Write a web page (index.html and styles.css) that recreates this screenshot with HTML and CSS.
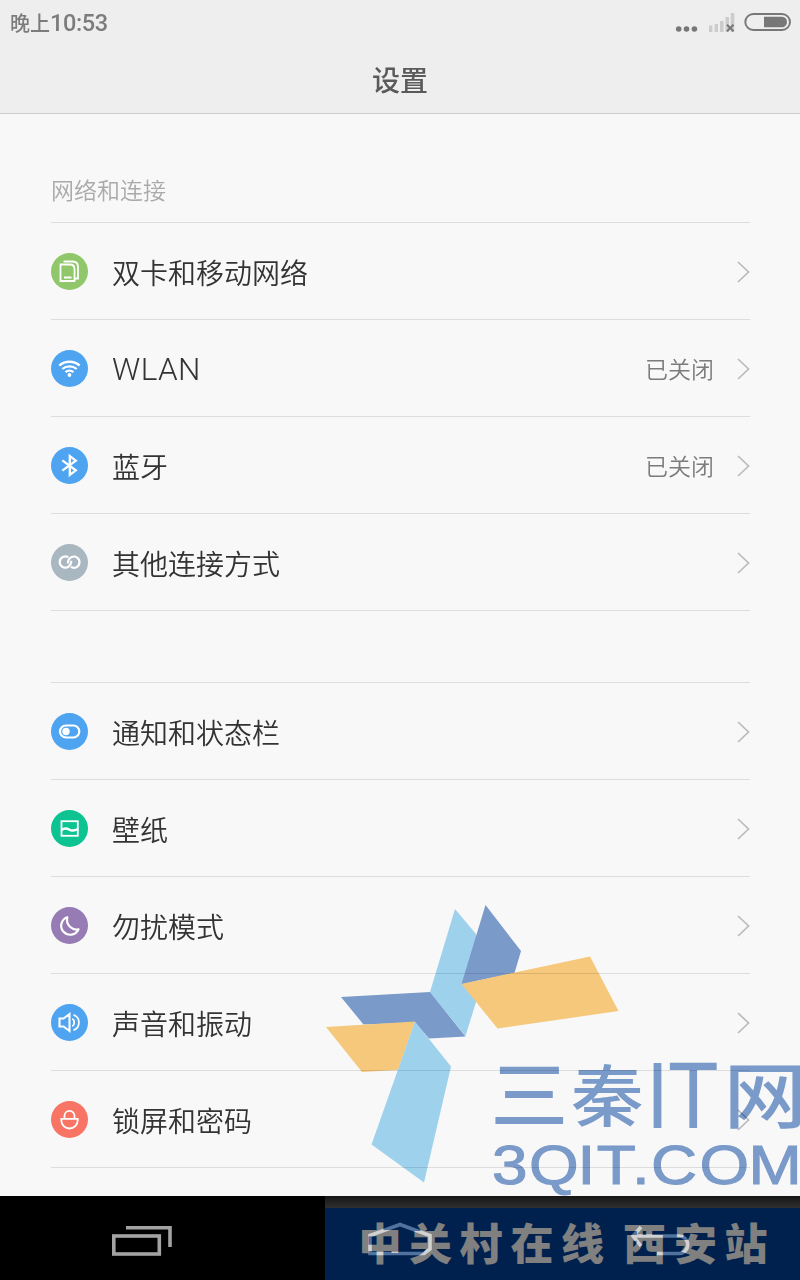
FILE: index.html
```
<!DOCTYPE html>
<html lang="zh-CN">
  <head>
    <meta charset="UTF-8" />
    <title>设置</title>
    <link rel="stylesheet" href="styles.css">
  </head>
  <body>
    <header class="header">
      <div class="status-bar">
        <div class="clock"><span class="period">晚上</span>10:53</div>
        <svg class="status-icons" width="122" height="24" viewBox="0 0 122 24">
          <g fill="#777">
            <circle cx="8.7" cy="18" r="2.8" />
            <circle cx="16.5" cy="18" r="2.8" />
            <circle cx="24.4" cy="18" r="2.8" />
          </g>
          <path fill="#ccc" d="M39 14.500h3.400V21H39zM44.600 13H48v8h-3.400zM50 10h3.600v11H50zM55.500 6H59v15h-3.500zM60.700 2h3.600v19h-3.600z" />
          <path stroke="#777" stroke-width="2" d="M57 13.800l6.500 6.500M63.500 13.800L57 20.300" />
          <rect x="75.300" y="3" width="44.700" height="16" rx="8" fill="none" stroke="#777" stroke-width="1.900" />
          <path fill="#777" d="M94 5.800h18a5 5 0 0 1 5 5.200 5 5 0 0 1-5 5.200H94z" />
        </svg>
      </div>
      <h1>设置</h1>
    </header>

    <main class="settings">
      <h2>网络和连接</h2>
      <ul class="group">
        <li class="row">
          <svg class="icon green" viewBox="0 0 37 37">
            <path d="M9.500 11.500h9.500q4.500 0 4.500 4.500v12h-14zM13 24.500h7.500" />
            <path d="M12.500 8.500h9q5.500 0 5.500 5.500v11.500h-3" />
          </svg>
          <span class="label">双卡和移动网络</span>
          <svg class="arrow" viewBox="0 0 13 22"><path d="M1 1l10.500 10L1 21" /></svg>
        </li>
        <li class="row">
          <svg class="icon blue" viewBox="0 0 37 37">
            <path stroke-width="2.300" d="M8.300 15.500c6-5 14.400-5 20.400 0M11.300 19c4-3.500 10.400-3.500 14.400 0M14.500 22.200c2.300-2 5.700-2 8 0" />
            <circle class="solid" cx="18.500" cy="25" r="1.900" />
          </svg>
          <span class="label latin">WLAN</span>
          <span class="value">已关闭</span>
          <svg class="arrow" viewBox="0 0 13 22"><path d="M1 1l10.500 10L1 21" /></svg>
        </li>
        <li class="row">
          <svg class="icon blue" viewBox="0 0 37 37">
            <path stroke-width="2.300" d="M11.300 13.300l13.500 10-6 4.700V9l6 4.700-13.500 10" />
          </svg>
          <span class="label">蓝牙</span>
          <span class="value">已关闭</span>
          <svg class="arrow" viewBox="0 0 13 22"><path d="M1 1l10.500 10L1 21" /></svg>
        </li>
        <li class="row">
          <svg class="icon gray" viewBox="0 0 37 37">
            <path stroke-width="2.200" d="M17.300 13.300A5.600 5.600 0 1 0 16.500 23.200C19.500 21.900 20.300 20 20.300 16.800" />
            <path stroke-width="2.200" d="M19.900 22.900A5.600 5.600 0 1 0 20.700 13C17.700 14.300 16.900 16.200 16.900 19.400" />
          </svg>
          <span class="label">其他连接方式</span>
          <svg class="arrow" viewBox="0 0 13 22"><path d="M1 1l10.500 10L1 21" /></svg>
        </li>
      </ul>

      <ul class="group">
        <li class="row">
          <svg class="icon blue" viewBox="0 0 37 37">
            <rect x="9" y="12.500" width="19.300" height="12" rx="6" stroke-width="2.200" />
            <circle class="solid" cx="15" cy="18.500" r="3.700" />
          </svg>
          <span class="label">通知和状态栏</span>
          <svg class="arrow" viewBox="0 0 13 22"><path d="M1 1l10.500 10L1 21" /></svg>
        </li>
        <li class="row">
          <svg class="icon teal" viewBox="0 0 37 37">
            <rect x="10.500" y="11.200" width="16.300" height="14.600" />
            <path stroke-width="2.400" d="M10.500 20c3-2.200 5-2 7.500-.5s5.500 1.300 9-.3" />
          </svg>
          <span class="label">壁纸</span>
          <svg class="arrow" viewBox="0 0 13 22"><path d="M1 1l10.500 10L1 21" /></svg>
        </li>
        <li class="row">
          <svg class="icon purple" viewBox="0 0 37 37">
            <path stroke-width="2.200" stroke-linejoin="round" d="M16.300 10.200a9 9 0 1 0 11.200 12c-6 1.600-13-4-11.200-12z" />
          </svg>
          <span class="label">勿扰模式</span>
          <svg class="arrow" viewBox="0 0 13 22"><path d="M1 1l10.500 10L1 21" /></svg>
        </li>
        <li class="row">
          <svg class="icon blue" viewBox="0 0 37 37">
            <path d="M8.500 14.500h4l6-4.500v17l-6-4.500h-4z" stroke-width="2.100" />
            <path d="M21.300 14.700c2.600 1.400 2.600 6.200 0 7.600M22.500 10.800c7.200 2.500 7.200 12.900 0 15.400" />
          </svg>
          <span class="label">声音和振动</span>
          <svg class="arrow" viewBox="0 0 13 22"><path d="M1 1l10.500 10L1 21" /></svg>
        </li>
        <li class="row">
          <svg class="icon red" viewBox="0 0 37 37">
            <path d="M10.300 17.800h16.400v1.500a8.200 8.200 0 0 1-16.400 0zM13.500 17.800v-3a5 5 0 0 1 10 0v3" />
          </svg>
          <span class="label">锁屏和密码</span>
          <svg class="arrow" viewBox="0 0 13 22"><path d="M1 1l10.500 10L1 21" /></svg>
        </li>
      </ul>
    </main>

    <nav class="nav-bar">
      <svg width="800" height="84" viewBox="0 0 800 84" fill="none" stroke="#a3a3a3" stroke-width="3.600">
        <path d="M126 31.700h44V51" />
        <rect x="113.800" y="40" width="45.500" height="18" />
        <path d="M370 57.500v-18l30-11 30 11V53l-6 4.500z" />
        <path d="M641 31l-8 9 8 10M634 40h45a8.750 8.750 0 0 1 0 17.500h-22" />
      </svg>
    </nav>

    <svg class="watermark" width="800" height="1280" viewBox="0 0 800 1280">
      <defs>
        <linearGradient id="strip" x1="0" y1="0" x2="0" y2="1">
          <stop offset="0" stop-color="#151515" />
          <stop offset="1" stop-color="#303030" />
        </linearGradient>
      </defs>
      <g class="logo">
        <path fill="#a2d7f3" d="M455 909l21 25v68l-10.500 34-35.500-44z" />
        <path fill="#7d9ecf" d="M485.500 905l35.500 46-6.500 22-53 11z" />
        <path fill="#fcce7f" d="M461.500 984L590 956.500l28.500 54.500-121 17.500z" />
        <path fill="#7d9ecf" d="M341 997l89-5 35.500 44.500-36.500 2-14-16-51.500 2z" />
        <path fill="#fcce7f" d="M326 1027l89-5.500-17 48.500-36 2z" />
        <path fill="#a2d7f3" d="M415 1021.500l36 45-27 116-52.500-38z" />
      </g>
      <g class="wordmark">
        <text class="site-name" transform="translate(490.500 1122) scale(1.050 1)">三</text>
        <text class="site-name" transform="translate(571 1121) scale(.98 .9)">秦</text>
        <text class="site-it" transform="translate(646 1128) scale(.88 1)" x="0 25">IT</text>
        <text class="site-name" transform="translate(723.500 1122) scale(1.130 .97)">网</text>
        <text class="site-url" transform="translate(0 1184) scale(1.140 1)" x="431.500 464 506.500 523.500 554.500 571 613.500 656.500">3QIT.COM</text>
      </g>
      <rect x="325" y="1196" width="475" height="12" fill="url(#strip)" />
      <g opacity=".5">
        <rect x="325" y="1208" width="475" height="72" fill="#00409a" />
        <text class="station" y="1260" x="380 430.500 481 532 582.500 620 644.500 695.500 746">中关村在线 西安站</text>
      </g>
    </svg>
  </body>
</html>
```
FILE: styles.css
```
* {
  box-sizing: border-box;
}

body {
  position: relative;
  display: flex;
  flex-direction: column;
  width: 800px;
  height: 1280px;
  margin: 0;
  overflow: hidden;
  background-color: #f8f8f8;
  color: #333;
  font-family: "Noto Sans CJK SC", sans-serif;
}

h1,
h2,
ul {
  margin: 0;
  padding: 0;
}

.header {
  height: 114px;
  background-color: #eee;
  border-bottom: 1px solid #ccc;
}

.status-bar {
  display: flex;
  justify-content: space-between;
  align-items: center;
  height: 46px;
  padding: 0 10px;
  color: #7c7c7c;
}

.clock {
  font-family: Roboto, "Noto Sans CJK SC", sans-serif;
  font-size: 23.5px;
  font-weight: 500;
  letter-spacing: -0.4px;
  line-height: 30px;
}

.period {
  font-size: 20px;
  letter-spacing: 0;
}

.status-icons {
  margin-right: -2px;
}

h1 {
  color: #5a5a5a;
  font-size: 28px;
  font-weight: 500;
  line-height: 67px;
  text-align: center;
}

.settings {
  flex: 1;
  padding: 55px 50px 0 51px;
}

h2 {
  height: 53px;
  color: #aaa;
  font-size: 23px;
  font-weight: 350;
  line-height: 40px;
}

.group {
  border-top: 1px solid #ddd;
  list-style: none;
}

.group + .group {
  margin-top: 71px;
}

.row {
  display: flex;
  align-items: center;
  height: 97px;
  border-bottom: 1px solid #ddd;
}

.icon {
  width: 37px;
  height: 37px;
  margin-right: 24px;
  border-radius: 50%;
  fill: none;
  stroke: #fff;
  stroke-width: 1.8;
}

.icon .solid {
  fill: #fff;
  stroke: none;
}

.green {
  background-color: #8fc76a;
}

.blue {
  background-color: #4ea4f1;
}

.gray {
  background-color: #a9b7c1;
}

.teal {
  background-color: #0cc391;
}

.purple {
  background-color: #967bb5;
}

.red {
  background-color: #f87464;
}

.label {
  flex: 1;
  padding-top: 1px;
  font-size: 28px;
  font-weight: 350;
}

.latin {
  padding-top: 3px;
  font-family: Roboto, sans-serif;
  font-size: 31.5px;
  font-weight: 300;
  letter-spacing: 0.4px;
}

.value {
  margin-right: 23px;
  color: #7c7c7c;
  font-size: 23px;
  font-weight: 350;
}

.arrow {
  width: 13px;
  height: 22px;
  margin-top: 1px;
  fill: none;
  stroke: #bbb;
  stroke-width: 1.7;
}

.nav-bar {
  height: 84px;
  background-color: #000;
}

.nav-bar svg {
  display: block;
}

/* site mark laid over the whole screen */
.watermark {
  position: absolute;
  top: 0;
  left: 0;
  pointer-events: none;
}

.logo,
.wordmark {
  mix-blend-mode: multiply;
}

.wordmark {
  fill: #7d9ecf;
}

.site-name {
  font-size: 74px;
  font-weight: 500;
}

.site-it {
  font-family: "Liberation Sans", sans-serif;
  font-size: 94px;
}

.site-url {
  font-family: "Liberation Sans", sans-serif;
  font-size: 56px;
  stroke: #7d9ecf;
  stroke-width: 1.1;
}

.station {
  fill: #fff;
  font-size: 43px;
  font-weight: 900;
  text-anchor: middle;
}
```
